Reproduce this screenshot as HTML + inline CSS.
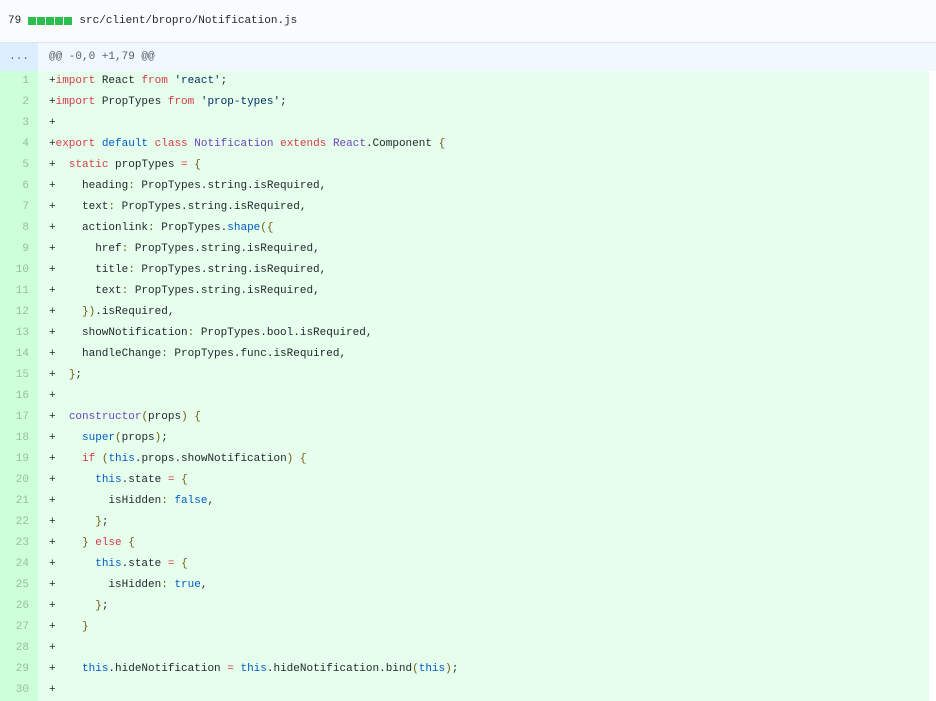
<html><head><style>
body{margin:0;width:936px;height:688px;overflow:hidden;background:#fff;font-family:"Liberation Mono",monospace;font-size:11px;color:#24292e}
.hd{height:42px;background:#fafbfc;border-bottom:1px solid #e1e4e8;display:flex;align-items:center;padding-left:8px;font-size:11px}
.bar{display:inline-block;width:8px;height:8px;background:#2cbe4e;margin-right:1px}
.hk{height:28px;background:#f1f8ff;display:flex;align-items:center;color:#586069}
.hk .g{width:38px;height:28px;background:#dbedff;display:flex;align-items:center;justify-content:center}
.rows{width:929px;background:#e6ffec}
.r{height:21px;line-height:21px;display:flex;white-space:pre}
.n{width:29px;padding-right:9px;text-align:right;background:#cdffd8;color:rgba(27,31,35,.3)}
.c{padding-left:11px}
.k{color:#d73a49}.b{color:#005cc5}.p{color:#6f42c1}.s{color:#032f62}.y{color:#735c0f}
</style></head><body>
<div class="hd">79&nbsp;<span class="bar"></span><span class="bar"></span><span class="bar"></span><span class="bar"></span><span class="bar"></span>&nbsp;src/client/bropro/Notification.js</div>
<div class="hk"><div class="g">...</div><span style="padding-left:11px">@@ -0,0 +1,79 @@</span></div>
<div class="rows">
<div class="r"><div class="n">1</div><div class="c">+<span class="k">import</span> React <span class="k">from</span> <span class="s">'react'</span>;</div></div>
<div class="r"><div class="n">2</div><div class="c">+<span class="k">import</span> PropTypes <span class="k">from</span> <span class="s">'prop-types'</span>;</div></div>
<div class="r"><div class="n">3</div><div class="c">+</div></div>
<div class="r"><div class="n">4</div><div class="c">+<span class="k">export</span> <span class="b">default</span> <span class="k">class</span> <span class="p">Notification</span> <span class="k">extends</span> <span class="p">React</span>.Component <span class="y">{</span></div></div>
<div class="r"><div class="n">5</div><div class="c">+  <span class="k">static</span> propTypes <span class="k">=</span> <span class="y">{</span></div></div>
<div class="r"><div class="n">6</div><div class="c">+    heading<span class="y">:</span> PropTypes.string.isRequired,</div></div>
<div class="r"><div class="n">7</div><div class="c">+    text<span class="y">:</span> PropTypes.string.isRequired,</div></div>
<div class="r"><div class="n">8</div><div class="c">+    actionlink<span class="y">:</span> PropTypes.<span class="b">shape</span><span class="y">({</span></div></div>
<div class="r"><div class="n">9</div><div class="c">+      href<span class="y">:</span> PropTypes.string.isRequired,</div></div>
<div class="r"><div class="n">10</div><div class="c">+      title<span class="y">:</span> PropTypes.string.isRequired,</div></div>
<div class="r"><div class="n">11</div><div class="c">+      text<span class="y">:</span> PropTypes.string.isRequired,</div></div>
<div class="r"><div class="n">12</div><div class="c">+    <span class="y">})</span>.isRequired,</div></div>
<div class="r"><div class="n">13</div><div class="c">+    showNotification<span class="y">:</span> PropTypes.bool.isRequired,</div></div>
<div class="r"><div class="n">14</div><div class="c">+    handleChange<span class="y">:</span> PropTypes.func.isRequired,</div></div>
<div class="r"><div class="n">15</div><div class="c">+  <span class="y">}</span>;</div></div>
<div class="r"><div class="n">16</div><div class="c">+</div></div>
<div class="r"><div class="n">17</div><div class="c">+  <span class="p">constructor</span><span class="y">(</span>props<span class="y">)</span> <span class="y">{</span></div></div>
<div class="r"><div class="n">18</div><div class="c">+    <span class="b">super</span><span class="y">(</span>props<span class="y">)</span>;</div></div>
<div class="r"><div class="n">19</div><div class="c">+    <span class="k">if</span> <span class="y">(</span><span class="b">this</span>.props.showNotification<span class="y">)</span> <span class="y">{</span></div></div>
<div class="r"><div class="n">20</div><div class="c">+      <span class="b">this</span>.state <span class="k">=</span> <span class="y">{</span></div></div>
<div class="r"><div class="n">21</div><div class="c">+        isHidden<span class="y">:</span> <span class="b">false</span>,</div></div>
<div class="r"><div class="n">22</div><div class="c">+      <span class="y">}</span>;</div></div>
<div class="r"><div class="n">23</div><div class="c">+    <span class="y">}</span> <span class="k">else</span> <span class="y">{</span></div></div>
<div class="r"><div class="n">24</div><div class="c">+      <span class="b">this</span>.state <span class="k">=</span> <span class="y">{</span></div></div>
<div class="r"><div class="n">25</div><div class="c">+        isHidden<span class="y">:</span> <span class="b">true</span>,</div></div>
<div class="r"><div class="n">26</div><div class="c">+      <span class="y">}</span>;</div></div>
<div class="r"><div class="n">27</div><div class="c">+    <span class="y">}</span></div></div>
<div class="r"><div class="n">28</div><div class="c">+</div></div>
<div class="r"><div class="n">29</div><div class="c">+    <span class="b">this</span>.hideNotification <span class="k">=</span> <span class="b">this</span>.hideNotification.bind<span class="y">(</span><span class="b">this</span><span class="y">)</span>;</div></div>
<div class="r"><div class="n">30</div><div class="c">+</div></div>
</div>
</body></html>
